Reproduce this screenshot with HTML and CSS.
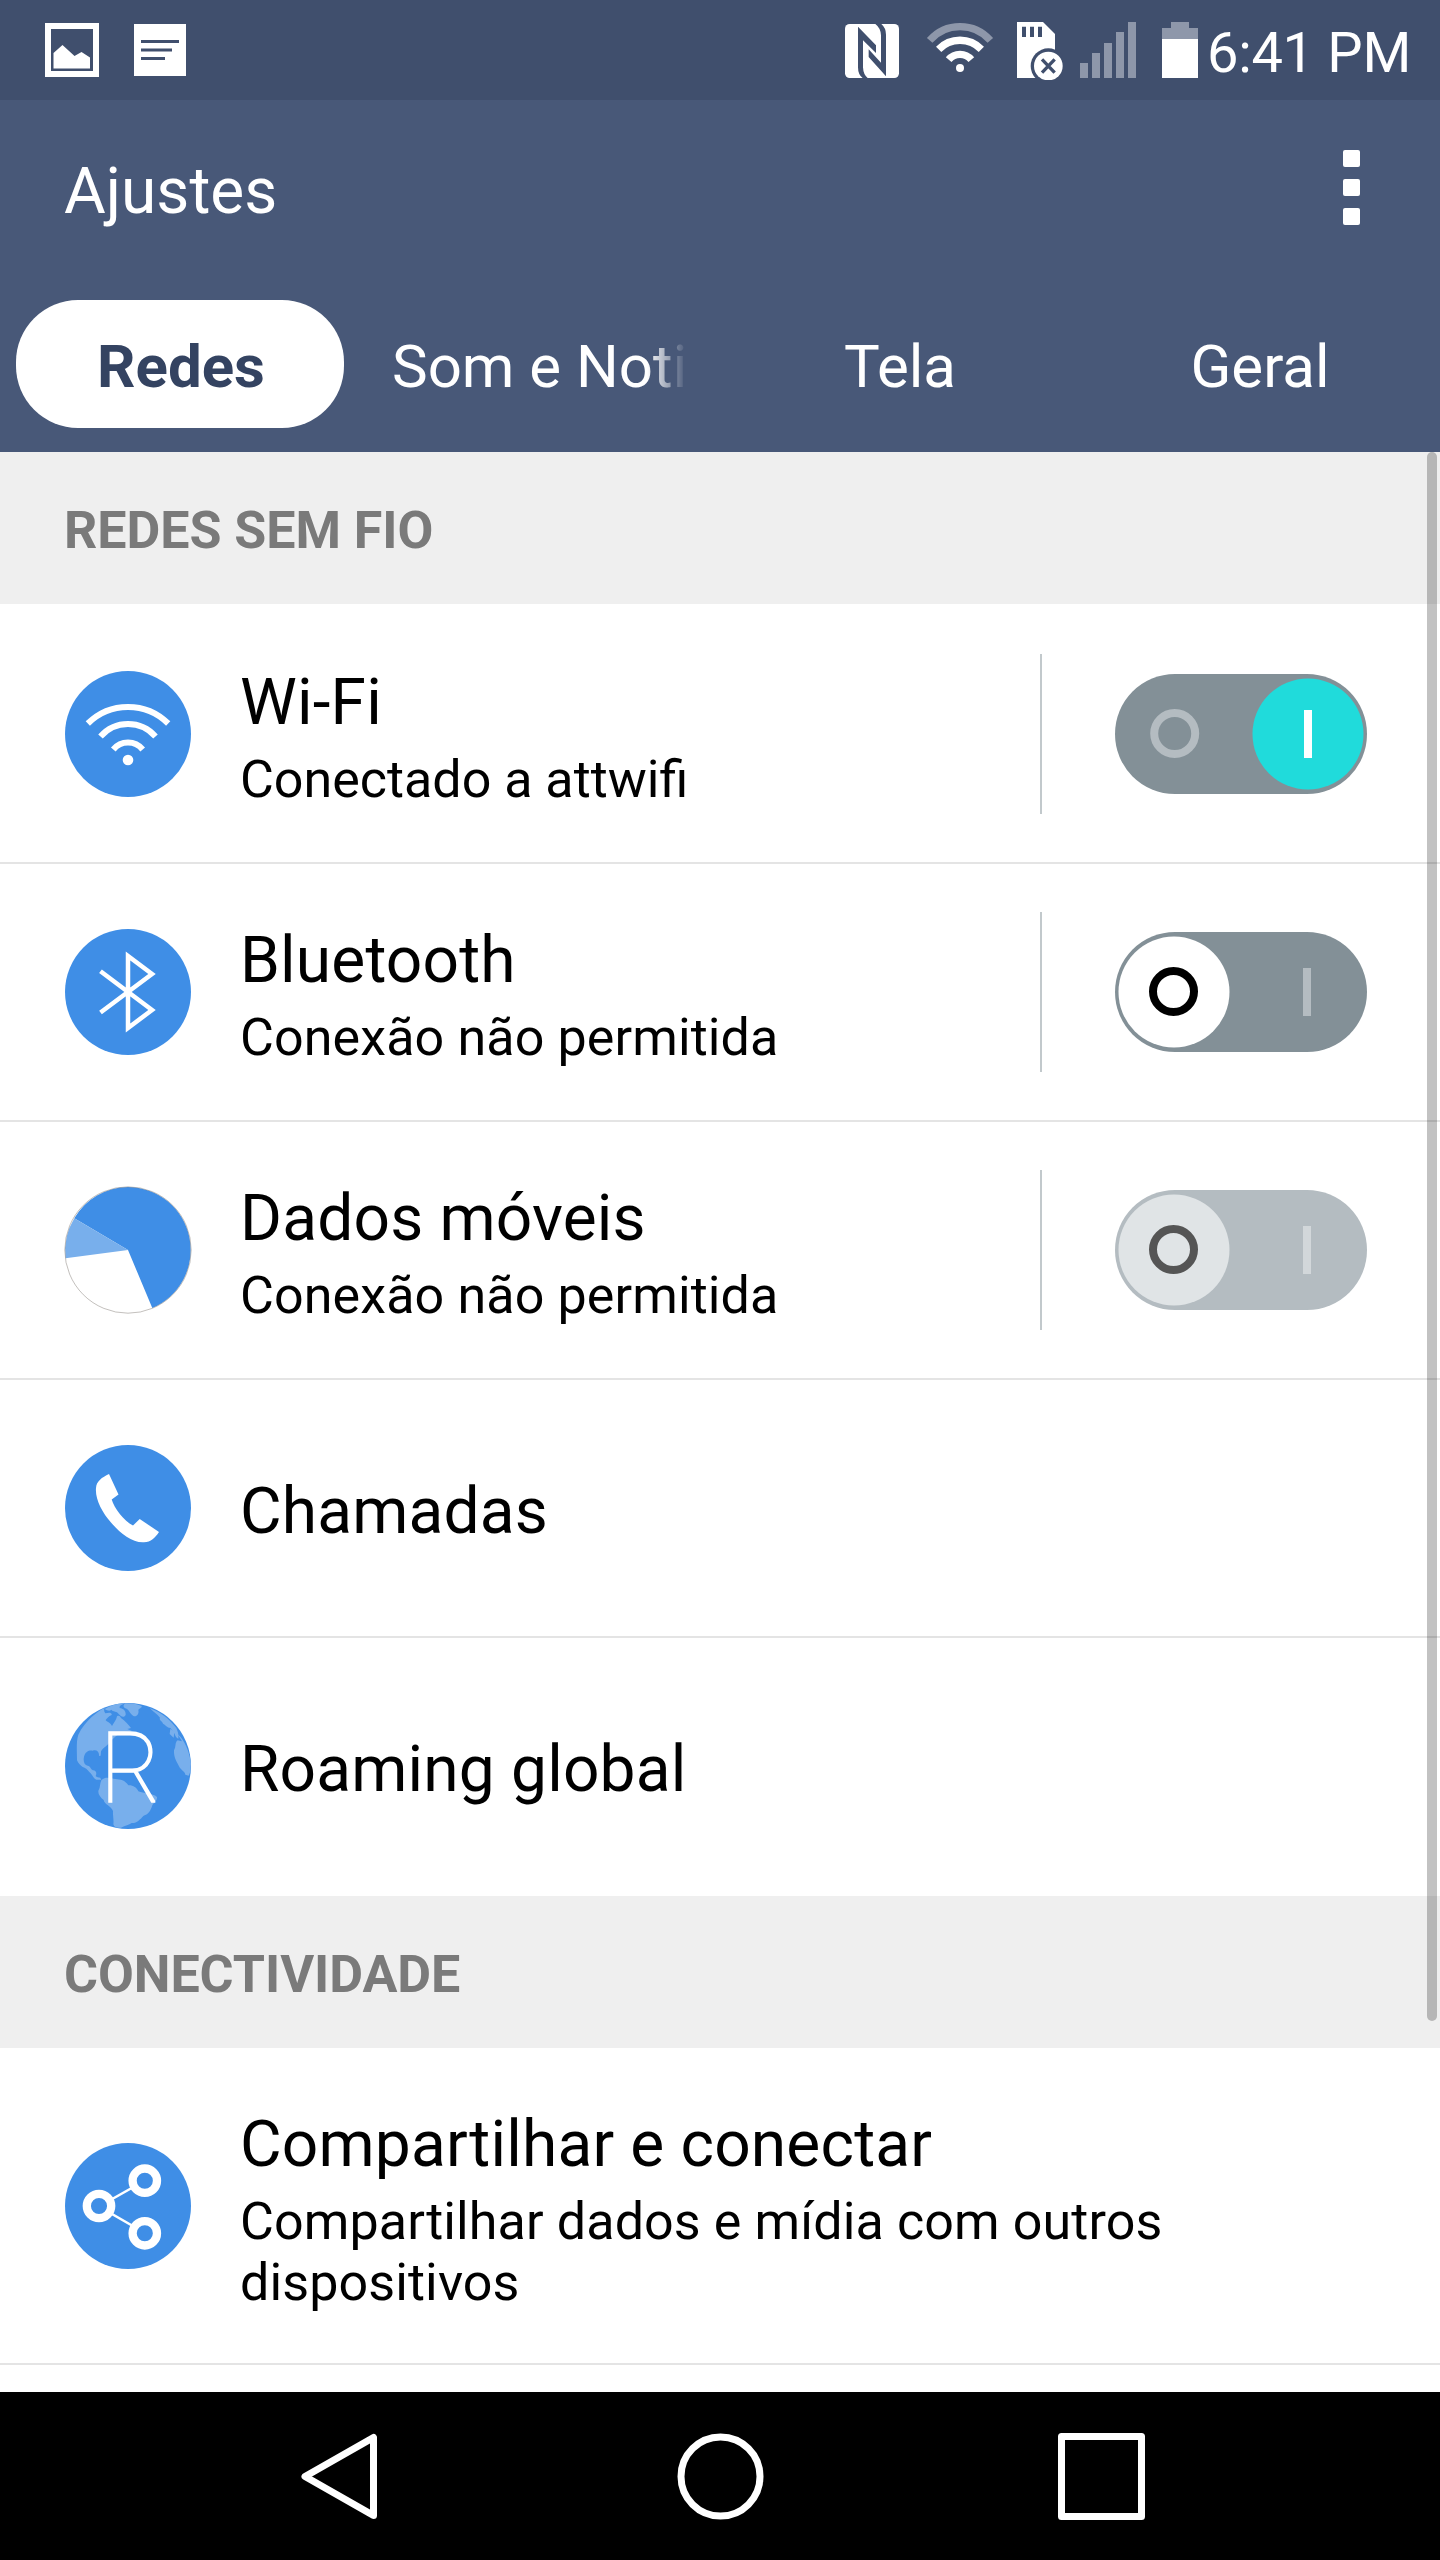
FILE: index.html
```html
<!DOCTYPE html>
<html lang="pt-BR">
<head>
<meta charset="utf-8">
<title>Ajustes</title>
<link rel="stylesheet" href="styles.css">
</head>
<body>
<div class="screen">
  <div class="status">
    <div class="status-left">
      <svg width="54" height="54" viewBox="0 0 54 54"><path d="M3 3H51V51H3Z" fill="none" stroke="#fff" stroke-width="6"/><path d="M8.5 30L17.5 22L29.5 33L36.5 29L45 34.500V45.500H8.500Z" fill="#fff"/></svg>
      <svg width="52" height="52" viewBox="0 0 52 52"><path fill="#fff" d="M0 0H52V52H0Z"/><path d="M7 17.500H45M7 26H38M7 34.500H31" stroke="#404f6d" stroke-width="3"/></svg>
    </div>
    <div class="status-right">
      <svg width="54" height="54" viewBox="27 30 162 162"><rect x="27" y="30" width="162" height="162" rx="14" fill="#fff"/><path fill="#404f6d" d="M66 38L120 94V117L81 79V160Q82 182 95 192H80Q66 182 66 160ZM118 30H136Q150 42 150 62V187L98 129V106L135 146V64Q134 42 118 30Z"/></svg>
      <svg class="s-wifi" width="68" height="54" viewBox="271 24 204 162"><g fill="none" stroke="#fff" stroke-width="22"><path d="M282 79A121 121 0 0 1 464 79" stroke="#8e97aa"/><path d="M309 106A89 89 0 0 1 437 106"/><path d="M339 137A44 44 0 0 1 407 137"/></g><circle cx="373" cy="162" r="12" fill="#fff"/></svg>
      <svg class="s-card" width="46" height="58" viewBox="543 24 138 174"><path d="M543 24H621L657 60V192H543Z" fill="#fff"/><circle cx="637" cy="156" r="53" fill="#404f6d"/><circle cx="637" cy="156" r="43" fill="#fff"/><path d="M564 38V69M588 38V69M612 38V69" stroke="#404f6d" stroke-width="12"/><path d="M618 136L656 176M656 136L618 176" stroke="#404f6d" stroke-width="10"/></svg>
      <svg class="s-signal" width="56" height="56" viewBox="0 0 56 56"><path d="M0 41H8V56H0ZM12 31H20V56H12ZM24 21H32V56H24ZM36 10H44V56H36ZM48 0H56V56H48Z" fill="#8e97aa"/></svg>
      <svg class="s-battery" width="36" height="56" viewBox="0 0 36 56"><path d="M9 0H27V6H36V18H0V6H9Z" fill="#8e97aa"/><path d="M0 17H36V56H0Z" fill="#fff"/></svg>
      <span class="clock">6:41 PM</span>
    </div>
  </div>
  <header class="bar">
    <h1>Ajustes</h1>
    <div class="more"><i></i><i></i><i></i></div>
  </header>
  <nav class="tabs">
    <div class="tab"><span class="pill">Redes</span></div>
    <div class="tab"><span class="fade">Som e Noti</span></div>
    <div class="tab">Tela</div>
    <div class="tab">Geral</div>
  </nav>
  <main class="list">
    <h2>REDES SEM FIO</h2>
    <div class="row">
      <svg class="icon" viewBox="0 0 126 126"><circle cx="63" cy="63" r="63" fill="#3f8ee6"/><g fill="none" stroke="#fff" stroke-width="6"><path d="M22.800 52.500A57 57 0 0 1 103.200 52.500"/><path d="M35.500 65.500A36.400 36.400 0 0 1 90.500 65.500"/><path d="M48.300 78.500A19 19 0 0 1 77.700 78.500"/></g><circle cx="63" cy="89" r="5.300" fill="#fff"/></svg>
      <div class="text"><div class="title">Wi-Fi</div><div class="sub sub-ligatures">Conectado a attwifi</div></div>
      <div class="control"><svg width="252" height="120" viewBox="0 0 252 120"><rect width="252" height="120" rx="60" fill="#839097"/><circle cx="193" cy="60" r="55.500" fill="#20dbdb"/><circle cx="59.700" cy="59.500" r="20.500" fill="none" stroke="#b4bcc1" stroke-width="8"/><path d="M189 36H197V84H189Z" fill="#fff"/></svg></div>
    </div>
    <div class="row">
      <svg class="icon" viewBox="0 0 126 126"><circle cx="63" cy="63" r="63" fill="#3f8ee6"/><path d="M35.500 42.300L87 81L63 99V27L87 45L35.500 83.500" fill="none" stroke="#fff" stroke-width="4.500"/></svg>
      <div class="text"><div class="title">Bluetooth</div><div class="sub">Conexão não permitida</div></div>
      <div class="control"><svg width="252" height="120" viewBox="0 0 252 120"><rect width="252" height="120" rx="60" fill="#839097"/><circle cx="59" cy="60" r="55.500" fill="#fff"/><circle cx="58.500" cy="59.500" r="20.500" fill="none" stroke="#000" stroke-width="8"/><path d="M188 36H196V84H188Z" fill="#b4bcc1"/></svg></div>
    </div>
    <div class="row">
      <svg class="icon" viewBox="0 0 126 126"><circle cx="63" cy="63" r="63" fill="#fff"/><path d="M63 63L9.300 31.300A63 63 0 0 1 63 0A63 63 0 0 1 87.300 121Z" fill="#3f8ee6"/><path d="M63 63L9.300 31.300A63 63 0 0 0 .5 71.300Z" fill="#78afec"/><circle cx="63" cy="63" r="63.200" fill="none" stroke="#87817b" stroke-opacity=".5"/></svg>
      <div class="text"><div class="title">Dados móveis</div><div class="sub">Conexão não permitida</div></div>
      <div class="control"><svg width="252" height="120" viewBox="0 0 252 120"><rect width="252" height="120" rx="60" fill="#b4bcc1"/><circle cx="59" cy="60" r="55.500" fill="#e0e4e6"/><circle cx="58.500" cy="59.500" r="20.500" fill="none" stroke="#555" stroke-width="8"/><path d="M188 36H196V84H188Z" fill="#d2d7da"/></svg></div>
    </div>
    <div class="row">
      <svg class="icon" viewBox="0 0 126 126"><circle cx="63" cy="63" r="63" fill="#3f8ee6"/><path d="M44 29L53.500 49.500L46.700 54.500C49 63 59 76 68 80.500L74.700 74L94 87C90 93 86 97 79 97.300C67 98 55 88 46 77.500C37 67 30 54 31 43C31.500 36 37 32.500 44 29Z" fill="#fff"/></svg>
      <div class="text"><div class="title">Chamadas</div></div>
    </div>
    <div class="row">
      <svg class="icon" viewBox="15 15 378 378">
        <circle cx="204" cy="204" r="189" fill="#3f8ee6"/>
        <g fill="#78afec">
          <path d="M134 30C115 38 75 68 55 110C48 130 51 165 51 187C55 197 62 202 68 207C76 210 82 214 88 222C95 227 98 236 105 243C112 248 119 243 124 247L121 239C115 238 110 238 107 234C111 225 109 218 99 217C91 213 92 204 83 203C73 202 69 190 72 176C76 161 87 156 98 158C108 154 118 159 117 173C124 178 122 167 123 160C129 149 148 139 155 126C168 115 176 105 194 102L216 99L202 93L213 90C205 80 197 70 183 60C180 54 176 52 171 55C169 66 163 72 156 84C151 72 140 73 137 66C143 60 145 54 155 51C157 43 146 43 136 46C132 41 131 35 134 30Z"/>
          <path d="M134 33C150 23 170 17 193 16C188 22 178 20 179 30C190 32 198 37 197 51C190 62 183 54 176 48C173 40 158 41 154 35C149 40 142 38 134 33Z"/>
          <path d="M196 16C215 15 234 19 245 24C246 31 239 30 235 36C238 48 229 58 220 54C210 48 207 34 196 31C188 27 190 20 196 16Z"/>
          <path d="M269 30C285 37 299 44 312 53C325 62 337 75 349 90C352 98 357 108 355 122C343 117 346 103 338 98L331 90C321 89 316 80 309 77C307 69 296 66 300 59C291 48 279 40 269 30ZM331 92L343 103L341 119L329 108Z"/>
          <path d="M353 109C374 125 389 163 393 197L391 221L386 233L376 230C374 219 363 218 357 205C349 189 341 178 342 157C349 146 344 133 353 127L366 130L353 109Z"/>
          <path d="M124 247C136 234 152 241 166 243C181 244 195 246 205 262C218 261 231 269 235 280C251 287 277 285 291 297C292 310 282 312 277 322C273 335 266 350 251 353C240 364 231 376 215 375C207 380 196 383 183 389C172 390 163 389 160 379C162 366 158 351 159 339C153 323 134 321 131 306C120 298 112 285 116 276C121 269 119 258 124 247Z"/>
        </g>
        <text class="globe-letter" x="121" y="313" textLength="182" lengthAdjust="spacingAndGlyphs">R</text>
      </svg>
      <div class="text"><div class="title">Roaming global</div></div>
    </div>
    <h2>CONECTIVIDADE</h2>
    <div class="row row-tall">
      <svg class="icon" viewBox="0 0 126 126"><circle cx="63" cy="63" r="63" fill="#3f8ee6"/><path d="M80 37.500L34 63.500L80 90" fill="none" stroke="#fff" stroke-width="2.500"/><g fill="#3f8ee6" stroke="#fff" stroke-width="8.300"><circle cx="34" cy="63" r="12.200"/><circle cx="79.800" cy="37.700" r="12.200"/><circle cx="79.800" cy="90.300" r="12.200"/></g></svg>
      <div class="text"><div class="title">Compartilhar e conectar</div><div class="sub">Compartilhar dados e mídia com outros dispositivos</div></div>
    </div>
    <div class="scrollbar"></div>
  </main>
  <footer class="keys">
    <svg width="76" height="87" viewBox="0 0 76 87"><path d="M4 43.500L72.500 4.500V82.500Z" fill="none" stroke="#fff" stroke-width="7" stroke-linejoin="round"/></svg>
    <svg width="87" height="87" viewBox="0 0 87 87"><circle cx="43.500" cy="43.500" r="39.500" fill="none" stroke="#fff" stroke-width="7"/></svg>
    <svg width="87" height="87" viewBox="0 0 87 87"><rect x="3.500" y="3.500" width="80" height="80" fill="none" stroke="#fff" stroke-width="7" stroke-linejoin="round"/></svg>
  </footer>
</div>
</body>
</html>
```
FILE: styles.css
```css
* { box-sizing: border-box; }
body { margin: 0; font-family: Roboto, "Liberation Sans", sans-serif; color: #000; }
svg { display: block; flex: none; }
h1, h2 { margin: 0; }

.screen { width: 1440px; height: 2560px; display: flex; flex-direction: column; overflow: hidden; background: #fff; }

.status { height: 100px; flex: none; display: flex; justify-content: space-between; background: #404f6d; color: #fff; }
.status-left { display: flex; align-items: center; gap: 35px; padding-left: 45px; }
.status-right { display: flex; align-items: flex-start; padding-top: 22px; }
.status-right svg:first-child { margin-top: 2px; }
.s-wifi { margin-left: 27px; }
.s-card { margin-left: 23px; }
.s-signal { margin-left: 17px; }
.s-battery { margin-left: 26px; }
.clock { width: 233px; margin-left: 9px; font-size: 56px; line-height: 62px; letter-spacing: -.3px; white-space: nowrap; }

.bar { height: 185px; flex: none; display: flex; justify-content: space-between; padding: 50px 80px 0 64px; background: #485878; color: #fff; }
.bar h1 { font-size: 64px; line-height: 84px; font-weight: 400; }
.more { display: flex; flex-direction: column; gap: 12px; }
.more i { width: 17px; height: 17px; border-radius: 2px; background: #fff; }

.tabs { height: 167px; flex: none; display: grid; grid-template-columns: repeat(4, 360px); padding: 15px 0 24px; background: #485878; color: #fff; font-size: 60px; line-height: 133px; }
.tab { text-align: center; white-space: nowrap; }
.pill { display: block; height: 128px; margin: 0 16px; padding-left: 2px; border-radius: 62px; background: #fff; color: #344361; font-weight: 700; }
.fade { display: block; margin: 0 33px 0 32px; text-align: left; -webkit-mask-image: linear-gradient(90deg, #000 255px, transparent 100%); mask-image: linear-gradient(90deg, #000 255px, transparent 100%); }

.list { flex: 1; min-height: 0; position: relative; overflow: hidden; }
.list h2 { height: 152px; margin-bottom: 2px; padding: 0 64px; background: #efefef; color: #7a7a7a; font-size: 52px; line-height: 157px; letter-spacing: -.05px; font-weight: 700; }
.row { height: 258px; display: flex; align-items: center; padding-left: 65px; border-bottom: 2px solid #e4e4e4; }
.row:has(+ h2) { border-bottom-color: #fff; }
.row-tall { height: 315px; }
.row-tall .icon { margin-bottom: 1px; }
.icon { width: 126px; height: 126px; overflow: visible; }
.text { flex: 1; padding: 6px 200px 0 49px; }
.title { font-size: 64px; line-height: 75px; letter-spacing: .18px; }
.sub { margin-top: 9px; font-size: 52px; line-height: 61px; letter-spacing: .12px; }
.sub-ligatures { letter-spacing: normal; }
.text:has(+ .control) { padding-right: 0; }
.control { width: 400px; height: 160px; display: flex; align-items: center; padding-left: 73px; border-left: 2px solid #c2c9cc; }
.globe-letter { font-size: 292px; font-weight: 100; fill: #fff; stroke: #fff; stroke-width: 5px; }
.scrollbar { position: absolute; top: 0; right: 3px; width: 10px; height: 1569px; border-radius: 5px; background: rgba(0, 0, 0, .24); }

.keys { height: 168px; flex: none; display: flex; align-items: center; gap: 294px; padding-left: 301px; background: #000; }
.keys svg:first-child { margin-right: 6px; }
```
